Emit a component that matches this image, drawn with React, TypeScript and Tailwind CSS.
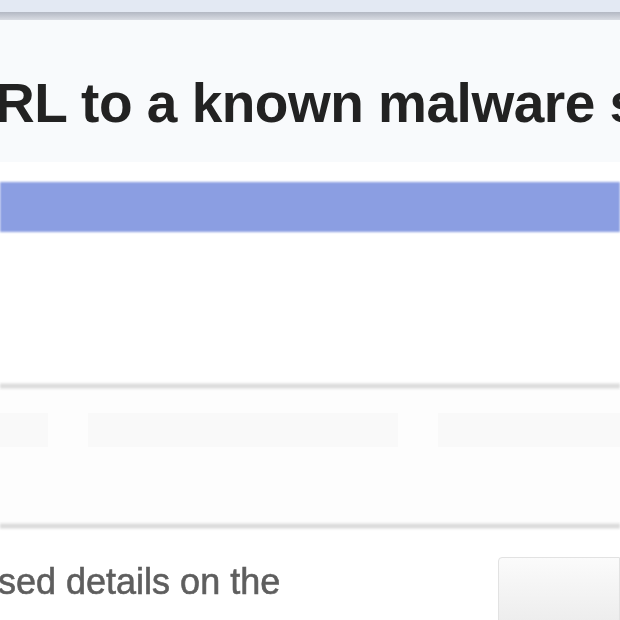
export default function App() {
  return (
    <div className="relative h-[620px] w-[620px] overflow-hidden bg-white font-['Liberation_Sans',Arial,sans-serif]">
      {/* window chrome */}
      <div className="h-[12px] bg-[#e3e9f3]" />
      <div className="h-[8px] bg-gradient-to-b from-[#b3b8c3] to-[#d9dce3]" />

      {/* header area */}
      <div className="h-[142px] bg-[#f8fafc] blur-[0.6px]">
        <h1 className="-ml-[5px] whitespace-nowrap pt-[56px] text-[55px] font-bold leading-none tracking-[-0.5px] text-[#222]">
          RL to a known malware s
        </h1>
      </div>

      {/* progress bar */}
      <div className="mt-[20px] h-[50px] bg-[#8b9ee2] blur-[1px]" />

      <div className="h-[151px]" />
      <div className="h-[6px] bg-gradient-to-b from-[#ececec] via-[#d8d8d8] to-[#ececec] blur-[1px]" />

      {/* options row */}
      <div className="flex h-[134px] flex-col bg-[#fdfdfd]">
        <div className="mt-[24px] flex h-[34px] gap-[40px]">
          <div className="w-[48px] bg-[#f9f9f9]" />
          <div className="w-[310px] bg-[#f9f9f9]" />
          <div className="flex-1 bg-[#f9f9f9]" />
        </div>
      </div>
      <div className="h-[6px] bg-gradient-to-b from-[#ececec] via-[#d6d6d6] to-[#ececec] blur-[1px]" />

      {/* footer */}
      <div className="flex items-start">
        <p className="-ml-[2px] mt-[35px] whitespace-nowrap text-[36px] leading-none text-[#5e5e5e] [-webkit-text-stroke:0.6px_#5e5e5e] blur-[0.7px]">
          sed details on the
        </p>
        <div className="ml-auto mt-[28px] h-[70px] w-[122px] rounded-tl-[4px] border border-[#e2e2e2] bg-gradient-to-b from-[#fbfbfb] to-[#ececec]" />
      </div>
    </div>
  )
}
